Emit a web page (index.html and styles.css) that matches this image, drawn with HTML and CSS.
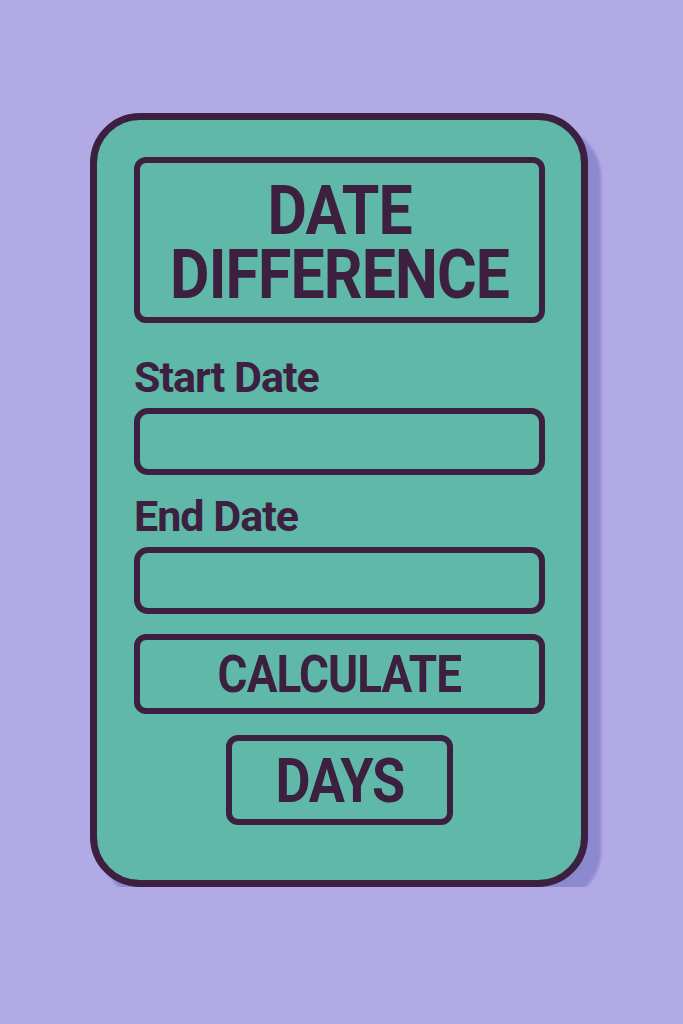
FILE: index.html
```html
<!DOCTYPE html>
<html lang="en">
<head>
    <meta charset="UTF-8">
    <meta name="viewport" content="width=device-width, initial-scale=1.0">
    <title>Date Difference</title>
    <link rel="stylesheet" href="styles.css">
</head>
<body>
    <div class="card">
        <h1 class="title"><span class="squeeze">DATE<br>DIFFERENCE</span></h1>
        <form class="date-form" id="dateForm">
            <label for="startDate">Start Date</label>
            <input type="text" id="startDate" name="startDate">
            <label for="endDate">End Date</label>
            <input type="text" id="endDate" name="endDate">
            <button type="submit"><span class="squeeze">CALCULATE</span></button>
        </form>
        <div class="result" id="result"><span class="squeeze">DAYS</span></div>
    </div>
</body>
</html>
```

FILE: styles.css
```css
body {
    margin: 0;
    padding: 0;
    background-color: #b2aae5;
    font-family: Roboto, "Liberation Sans", sans-serif;
    color: #3d1f40;
}
.card {
    box-sizing: border-box;
    width: 498px;
    margin: 113px 0 0 90px;
    padding: 37px 36px 55px 37px;
    background-color: #5fb8a8;
    border: 7px solid #3d1f40;
    border-radius: 50px;
    box-shadow: 13px 14px 3px #8c89cf;
    display: flex;
    flex-direction: column;
}
/* no condensed face installed, so squash the bold caps a bit */
.squeeze {
    display: inline-block;
    transform: scaleX(0.88);
}
.title {
    margin: 0;
    padding: 16px 0 10px;
    border: 6px solid #3d1f40;
    border-radius: 12px;
    text-align: center;
    font-weight: bold;
    font-size: 69px;
    line-height: 64px;
    letter-spacing: -1px;
}
.date-form {
    display: flex;
    flex-direction: column;
}
.date-form label {
    font-size: 43px;
    line-height: 43px;
    font-weight: bold;
    letter-spacing: -1px;
    margin: 33px 0 9px;
}
.date-form label + input + label {
    margin-top: 20px;
}
.date-form input {
    box-sizing: border-box;
    height: 67px;
    border: 6px solid #3d1f40;
    border-radius: 14px;
    background: transparent;
}
.date-form button,
.result {
    box-sizing: border-box;
    border: 6px solid #3d1f40;
    border-radius: 12px;
    background: transparent;
    color: #3d1f40;
    font-family: Roboto, "Liberation Sans", sans-serif;
    font-weight: bold;
    display: flex;
    justify-content: center;
    align-items: center;
}
.date-form button {
    height: 80px;
    margin-top: 20px;
    font-size: 52px;
    letter-spacing: -1px;
    cursor: pointer;
}
.date-form button .squeeze {
    transform: scaleX(0.88);
}
.result {
    align-self: center;
    width: 227px;
    height: 90px;
    margin-top: 21px;
    font-size: 62px;
    letter-spacing: -1.5px;
}
.result .squeeze {
    transform: scaleX(0.87);
}
```
